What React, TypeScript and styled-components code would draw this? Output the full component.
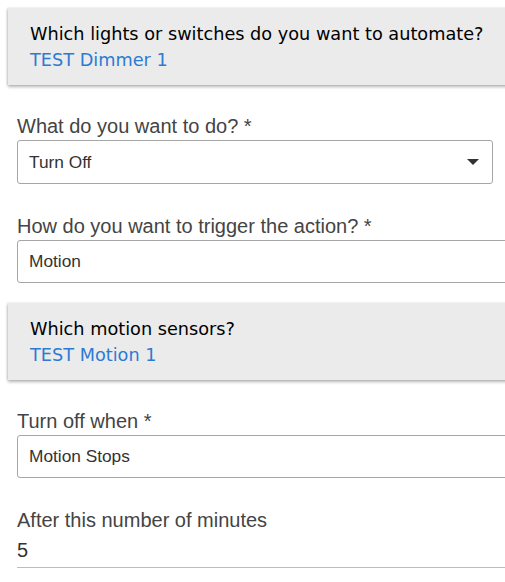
import { FC } from "react"
import styled, { createGlobalStyle } from "styled-components"

const GlobalStyle = createGlobalStyle`
  html,
  body {
    margin: 0;
    padding: 0;
    background: #ffffff;
    overflow: hidden;
  }
`

const Page = styled.div`
  padding: 8px 0 0 8px;
  font-family: "Liberation Sans", Arial, sans-serif;
  width: 700px;
`

const Panel = styled.div<{ $top?: number }>`
  margin-top: ${({ $top = 0 }) => $top}px;
  background: #ebebeb;
  padding: 13px 22px 12px;
  box-shadow: 0 2px 3px rgba(0, 0, 0, 0.28), -1px 0 2px rgba(0, 0, 0, 0.12);
  font-family: "DejaVu Sans", Tahoma, sans-serif;
  font-size: 17.7px;
  line-height: 26px;
`

const PanelTitle = styled.div`
  color: #000000;
`

const PanelLink = styled.div`
  color: #2b7bd4;
`

const Field = styled.div<{ $top: number }>`
  margin: ${({ $top }) => $top}px 0 0 9px;
`

const Label = styled.div`
  font-size: 20px;
  line-height: 24px;
  color: #444444;
  margin-bottom: 2px;
`

const Box = styled.div<{ $width: number; $height: number }>`
  box-sizing: border-box;
  width: ${({ $width }) => $width}px;
  height: ${({ $height }) => $height}px;
  border: 1px solid #a6a6a6;
  border-radius: 3px;
  display: flex;
  align-items: center;
  justify-content: space-between;
  padding: 0 13px 0 11px;
  font-size: 17.3px;
  color: #333333;
`

const Arrow = styled.span`
  width: 0;
  height: 0;
  border-left: 6px solid transparent;
  border-right: 6px solid transparent;
  border-top: 6px solid #333333;
`

const Plain = styled.div`
  box-sizing: border-box;
  width: 600px;
  font-size: 20px;
  line-height: 24px;
  color: #333333;
  padding: 4px 0 5px;
  border-bottom: 1px solid #bdbdbd;
`

interface SelectProps {
  value: string
  width: number
  height?: number
  dropdown?: boolean
}

const Select: FC<SelectProps> = ({ value, width, height = 43, dropdown = false }) => (
  <Box $width={width} $height={height}>
    <span>{value}</span>
    {dropdown && <Arrow />}
  </Box>
)

export default function App() {
  return (
    <Page>
      <GlobalStyle />
      <Panel>
        <PanelTitle>Which lights or switches do you want to automate?</PanelTitle>
        <PanelLink>TEST Dimmer 1</PanelLink>
      </Panel>

      <Field $top={29}>
        <Label>What do you want to do? *</Label>
        <Select value="Turn Off" width={476} height={44} dropdown />
      </Field>

      <Field $top={30}>
        <Label>How do you want to trigger the action? *</Label>
        <Select value="Motion" width={600} />
      </Field>

      <Panel $top={20}>
        <PanelTitle>Which motion sensors?</PanelTitle>
        <PanelLink>TEST Motion 1</PanelLink>
      </Panel>

      <Field $top={29}>
        <Label>Turn off when *</Label>
        <Select value="Motion Stops" width={600} />
      </Field>

      <Field $top={30}>
        <Label>After this number of minutes</Label>
        <Plain>5</Plain>
      </Field>
    </Page>
  )
}
